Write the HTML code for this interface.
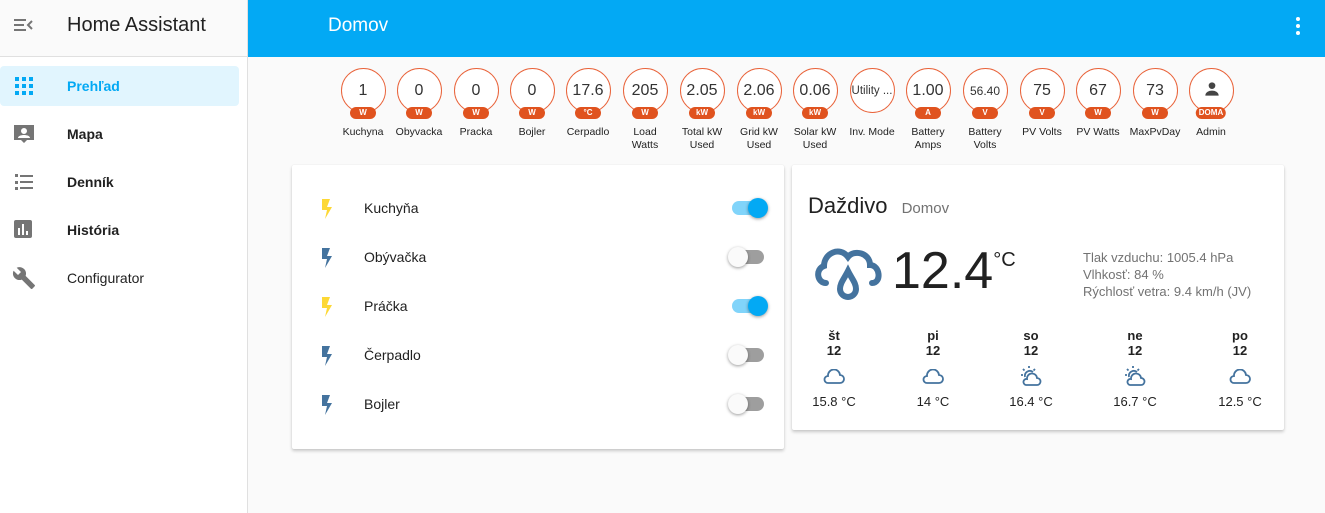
<!DOCTYPE html>
<html><head><meta charset="utf-8"><style>
*{box-sizing:border-box;margin:0;padding:0}
body{width:1325px;height:513px;overflow:hidden;background:#fafafa;font-family:"Liberation Sans",sans-serif;color:#212121;position:relative}
.side{position:absolute;left:0;top:0;width:248px;height:513px;background:#fff;border-right:1px solid #e0e0e0}
.sh{height:57px;border-bottom:1px solid #e0e0e0;background:#fafafa;position:relative}
.sh .t{position:absolute;left:67px;top:14px;font-size:20px;color:#212121}
.item{position:absolute;left:0;width:239px;height:40px;font-size:14px;font-weight:bold}
.item span{position:absolute;left:67px;top:12px}
.item svg{position:absolute;left:12px;top:8px}
.top{position:absolute;left:248px;top:0;right:0;height:57px;background:#03a9f4;color:#fff}
.top .t{position:absolute;left:80px;top:15px;font-size:19px}
.b{position:absolute;top:68px;width:56px;text-align:center}
.c{width:45px;height:45px;margin:0 auto;border:1.5px solid #e9633a;border-radius:50%;background:#fff;font-size:16px;color:#333;line-height:44px;position:relative}
.u{position:absolute;left:50%;transform:translateX(-50%);top:38px;background:#e0531f;color:#fff;font-size:8px;line-height:12px;height:12px;min-width:26px;padding:0 3px;border-radius:6px;font-weight:bold}
.l{font-size:10.5px;line-height:13px;margin-top:13px;color:#222}
.card{position:absolute;background:#fff;box-shadow:0 2px 3px rgba(0,0,0,.2),0 0 1px rgba(0,0,0,.1);border-radius:2px}
.row{position:absolute;left:0;width:100%;height:49px}
.row .n{position:absolute;left:72px;top:15px;font-size:14px}
.row svg{position:absolute;left:28px;top:12px}
.tg{position:absolute;left:440px;top:16px;width:32px;height:14px;border-radius:7px;background:#9e9e9e}
.tg i{position:absolute;top:-3px;left:-4px;width:20px;height:20px;border-radius:50%;background:#fafafa;box-shadow:0 1px 3px rgba(0,0,0,.4)}
.tg.on{background:#81d4fa}.tg.on i{left:16px;background:#03a9f4}
.f{position:absolute;top:163px;width:70px;text-align:center;font-size:13px}
</style></head><body>
<div class="side">
 <div class="sh">
  <svg style="position:absolute;left:13px;top:17px" width="22" height="16" viewBox="0 0 22 16"><path d="M1 3h12M1 8h10M1 13h12M19 4l-4 4 4 4" stroke="#757575" stroke-width="2" fill="none"/></svg>
  <div class="t">Home Assistant</div>
 </div>
 <div class="item" style="top:66px;background:#e1f5fe;border-radius:4px;color:#03a9f4"><svg width="24" height="24" viewBox="0 0 24 24" fill="#03a9f4"><path d="M3 3h4v4H3zM10 3h4v4h-4zM17 3h4v4h-4zM3 10h4v4H3zM10 10h4v4h-4zM17 10h4v4h-4zM3 17h4v4H3zM10 17h4v4h-4zM17 17h4v4h-4z"/></svg><span style="top:12px">Prehľad</span></div>
 <div class="item" style="top:114px"><svg width="24" height="24" viewBox="0 0 24 24" fill="#757575"><path d="M2 3h20v15h-7l-3 3-3-3H2zM12 6a3 3 0 100 6 3 3 0 000-6zM6 16h12c0-2-3-3-6-3s-6 1-6 3z"/></svg><span>Mapa</span></div>
 <div class="item" style="top:162px"><svg width="24" height="24" viewBox="0 0 24 24" fill="#757575"><path d="M3 4h3v3H3zM8 5h13v2H8zM3 11h3v3H3zM8 11h13v2H8zM3 17h3v3H3zM8 17h13v2H8z"/></svg><span>Denník</span></div>
 <div class="item" style="top:210px"><svg width="24" height="24" viewBox="0 0 24 24"><rect x="2" y="2" width="18" height="18" rx="2" fill="#757575"/><path d="M7 10v7M11 6v11M15 13v4" stroke="#fff" stroke-width="2"/></svg><span>História</span></div>
 <div class="item" style="top:258px"><svg width="24" height="24" viewBox="0 0 24 24" fill="#757575"><path d="M22.7 19l-9.1-9.1c.9-2.3.4-5-1.5-6.9-2-2-5-2.4-7.4-1.3L9 6 6 9 1.6 4.7C.4 7.1.9 10.1 2.9 12.1c1.9 1.9 4.6 2.4 6.9 1.5l9.1 9.1c.4.4 1 .4 1.4 0l2.3-2.3c.5-.4.5-1.1.1-1.4z"/></svg><span style="font-weight:normal">Configurator</span></div>
</div>
<div class="top"><div class="t">Domov</div>
 <svg style="position:absolute;right:24px;top:16px" width="6" height="20" viewBox="0 0 6 20" fill="#fff"><circle cx="3" cy="3" r="2"/><circle cx="3" cy="10" r="2"/><circle cx="3" cy="17" r="2"/></svg></div>

<div class="b" style="left:335px"><div class="c">1<div class="u">W</div></div><div class="l">Kuchyna</div></div>
<div class="b" style="left:391px"><div class="c">0<div class="u">W</div></div><div class="l">Obyvacka</div></div>
<div class="b" style="left:448px"><div class="c">0<div class="u">W</div></div><div class="l">Pracka</div></div>
<div class="b" style="left:504px"><div class="c">0<div class="u">W</div></div><div class="l">Bojler</div></div>
<div class="b" style="left:560px"><div class="c">17.6<div class="u">°C</div></div><div class="l">Cerpadlo</div></div>
<div class="b" style="left:617px"><div class="c">205<div class="u">W</div></div><div class="l">Load<br>Watts</div></div>
<div class="b" style="left:674px"><div class="c">2.05<div class="u">kW</div></div><div class="l">Total kW<br>Used</div></div>
<div class="b" style="left:731px"><div class="c">2.06<div class="u">kW</div></div><div class="l">Grid kW<br>Used</div></div>
<div class="b" style="left:787px"><div class="c">0.06<div class="u">kW</div></div><div class="l">Solar kW<br>Used</div></div>
<div class="b" style="left:844px"><div class="c" style="font-size:11.5px">Utility ...</div><div class="l">Inv. Mode</div></div>
<div class="b" style="left:900px"><div class="c">1.00<div class="u">A</div></div><div class="l">Battery<br>Amps</div></div>
<div class="b" style="left:957px"><div class="c" style="font-size:12px">56.40<div class="u">V</div></div><div class="l">Battery<br>Volts</div></div>
<div class="b" style="left:1014px"><div class="c">75<div class="u">V</div></div><div class="l">PV Volts</div></div>
<div class="b" style="left:1070px"><div class="c">67<div class="u">W</div></div><div class="l">PV Watts</div></div>
<div class="b" style="left:1127px"><div class="c">73<div class="u">W</div></div><div class="l">MaxPvDay</div></div>
<div class="b" style="left:1183px"><div class="c"><svg style="position:absolute;left:12px;top:10px" width="20" height="20" viewBox="0 0 24 24" fill="#444"><circle cx="12" cy="8" r="4"/><path d="M4 20c0-4 4-6 8-6s8 2 8 6z"/></svg><div class="u">DOMA</div></div><div class="l">Admin</div></div>

<div class="card" style="left:292px;top:165px;width:492px;height:284px">
 <div class="row" style="top:20px"><svg width="16" height="24" viewBox="0 0 16 24"><path d="M2 2h8L7 10h5L5 22l2-9H2z" fill="#fdd835"/></svg><div class="n">Kuchyňa</div><div class="tg on"><i></i></div></div>
 <div class="row" style="top:69px"><svg width="16" height="24" viewBox="0 0 16 24"><path d="M2 2h8L7 10h5L5 22l2-9H2z" fill="#44739e"/></svg><div class="n">Obývačka</div><div class="tg"><i></i></div></div>
 <div class="row" style="top:118px"><svg width="16" height="24" viewBox="0 0 16 24"><path d="M2 2h8L7 10h5L5 22l2-9H2z" fill="#fdd835"/></svg><div class="n">Práčka</div><div class="tg on"><i></i></div></div>
 <div class="row" style="top:167px"><svg width="16" height="24" viewBox="0 0 16 24"><path d="M2 2h8L7 10h5L5 22l2-9H2z" fill="#44739e"/></svg><div class="n">Čerpadlo</div><div class="tg"><i></i></div></div>
 <div class="row" style="top:216px"><svg width="16" height="24" viewBox="0 0 16 24"><path d="M2 2h8L7 10h5L5 22l2-9H2z" fill="#44739e"/></svg><div class="n">Bojler</div><div class="tg"><i></i></div></div>
</div>

<div class="card" style="left:792px;top:165px;width:492px;height:265px">
 <div style="position:absolute;left:16px;top:28px;font-size:22px;color:#212121">Daždivo <span style="font-size:15px;color:#727272;margin-left:8px">Domov</span></div>
 <svg style="position:absolute;left:20px;top:78px" width="72" height="64" viewBox="0 0 72 64" fill="none" stroke="#44739e" stroke-width="6" stroke-linecap="round"><path d="M14 40C5 40 3 26 12 23C12 10 28 3 36 14C42 6 58 10 58 22C68 22 70 40 60 40"/><path d="M36 28C32 36 28 40 28 46A8 8 0 0044 46C44 40 40 36 36 28Z"/></svg>
 <div style="position:absolute;left:100px;top:76px;font-size:52px;color:#212121">12.4<span style="font-size:20px;vertical-align:top;position:relative;top:8px">°C</span></div>
 <div style="position:absolute;left:291px;top:84px;font-size:13px;line-height:17px;color:#727272">Tlak vzduchu: 1005.4 hPa<br>Vlhkosť: 84 %<br>Rýchlosť vetra: 9.4 km/h (JV)</div>
 <div class="f" style="left:7px"><b>št<br>12</b></div>
 <div class="f" style="left:106px"><b>pi<br>12</b></div>
 <div class="f" style="left:204px"><b>so<br>12</b></div>
 <div class="f" style="left:308px"><b>ne<br>12</b></div>
 <div class="f" style="left:413px"><b>po<br>12</b></div>
 <svg style="position:absolute;left:31px;top:204px" width="22" height="16" viewBox="0 0 22 16" fill="none" stroke="#44739e" stroke-width="1.8"><path d="M5 14H17A4 4 0 0017 6A6 6 0 005 7A3.5 3.5 0 005 14Z"/></svg>
 <svg style="position:absolute;left:130px;top:204px" width="22" height="16" viewBox="0 0 22 16" fill="none" stroke="#44739e" stroke-width="1.8"><path d="M5 14H17A4 4 0 0017 6A6 6 0 005 7A3.5 3.5 0 005 14Z"/></svg>
 <svg style="position:absolute;left:228px;top:200px" width="22" height="22" viewBox="0 0 22 22" fill="none" stroke="#44739e" stroke-width="1.8"><path d="M6 20H17A3.5 3.5 0 0017 13A5 5 0 007 14A3 3 0 006 20Z"/><path d="M5 12A5 5 0 0113 7M9 1v2M3 4l1.5 1.5M15 4l-1.5 1.5M1 10h2"/></svg>
 <svg style="position:absolute;left:332px;top:200px" width="22" height="22" viewBox="0 0 22 22" fill="none" stroke="#44739e" stroke-width="1.8"><path d="M6 20H17A3.5 3.5 0 0017 13A5 5 0 007 14A3 3 0 006 20Z"/><path d="M5 12A5 5 0 0113 7M9 1v2M3 4l1.5 1.5M15 4l-1.5 1.5M1 10h2"/></svg>
 <svg style="position:absolute;left:437px;top:204px" width="22" height="16" viewBox="0 0 22 16" fill="none" stroke="#44739e" stroke-width="1.8"><path d="M5 14H17A4 4 0 0017 6A6 6 0 005 7A3.5 3.5 0 005 14Z"/></svg>
 <div class="f" style="left:7px;top:229px">15.8 °C</div>
 <div class="f" style="left:106px;top:229px">14 °C</div>
 <div class="f" style="left:204px;top:229px">16.4 °C</div>
 <div class="f" style="left:308px;top:229px">16.7 °C</div>
 <div class="f" style="left:413px;top:229px">12.5 °C</div>
</div>
</body></html>
